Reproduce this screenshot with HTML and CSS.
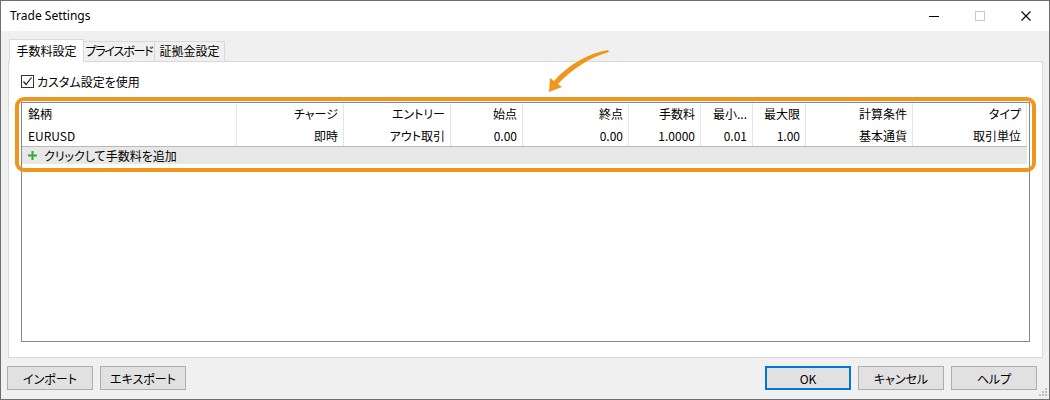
FILE: index.html
```html
<!DOCTYPE html>
<html lang="ja">
  <head>
    <meta charset="UTF-8" />
    <title>Trade Settings</title>
    <link rel="stylesheet" href="styles.css">
  </head>
  <body>
    <div class="window">
      <div class="titlebar">
        <span class="title">Trade Settings</span>
        <div class="caption">
          <div class="cap-btn">
            <svg width="10" height="10" viewBox="0 0 10 10"><rect x="0" y="5" width="10" height="1" fill="#000"/></svg>
          </div>
          <div class="cap-btn">
            <svg width="10" height="10" viewBox="0 0 10 10"><rect x="0.5" y="0.5" width="9" height="9" fill="none" stroke="#c8c8c8"/></svg>
          </div>
          <div class="cap-btn">
            <svg width="10" height="10" viewBox="0 0 10 10"><path d="M0.5 0.5 L9.5 9.5 M9.5 0.5 L0.5 9.5" stroke="#000" stroke-width="1.1"/></svg>
          </div>
        </div>
      </div>

      <div class="client">
        <div class="tabs">
          <div class="tab active">手数料設定</div>
          <div class="tab tab-board">プライスボード</div>
          <div class="tab tab-margin">証拠金設定</div>
        </div>

        <div class="panel">
          <label class="check">
            <span class="box">
              <svg width="11" height="11" viewBox="0 0 11 11"><polyline points="1.5,5.5 4,8.5 9.5,1.5" fill="none" stroke="#222" stroke-width="1.2"/></svg>
            </span>
            カスタム設定を使用
          </label>

          <div class="grid">
            <div class="row head">
              <div class="cell left">銘柄</div>
              <div class="cell">チャージ</div>
              <div class="cell">エントリー</div>
              <div class="cell">始点</div>
              <div class="cell">終点</div>
              <div class="cell">手数料</div>
              <div class="cell">最小...</div>
              <div class="cell">最大限</div>
              <div class="cell">計算条件</div>
              <div class="cell">タイプ</div>
            </div>
            <div class="row data">
              <div class="cell left">EURUSD</div>
              <div class="cell">即時</div>
              <div class="cell">アウト取引</div>
              <div class="cell">0.00</div>
              <div class="cell">0.00</div>
              <div class="cell">1.0000</div>
              <div class="cell">0.01</div>
              <div class="cell">1.00</div>
              <div class="cell">基本通貨</div>
              <div class="cell">取引単位</div>
            </div>
            <div class="add-row">
              <svg width="9" height="9" viewBox="0 0 9 9"><path d="M3.5 0h2v3.5h3.5v2h-3.5v3.5h-2v-3.5h-3.5v-2h3.5z" fill="#2eac2e"/></svg>
              <span>クリックして手数料を追加</span>
            </div>
          </div>

          <div class="highlight"></div>
        </div>

        <div class="footer">
          <div class="group">
            <button class="btn">インポート</button>
            <button class="btn">エキスポート</button>
          </div>
          <div class="group">
            <button class="btn default">OK</button>
            <button class="btn">キャンセル</button>
            <button class="btn">ヘルプ</button>
          </div>
        </div>
      </div>

      <!-- callout arrow pointing at the commission grid -->
      <svg class="arrow" width="70" height="50" viewBox="545 46 70 50">
        <path d="M608,50 C590,53 570,63 554,81 L550,78 L549,92 L562,87 L558,84 C573,68 591,57 609,52 Z" fill="#f0961c"/>
      </svg>

      <svg class="grip" width="9" height="9" viewBox="0 0 9 9">
        <g fill="#bdbdbd">
          <rect x="6" y="0" width="2" height="2"/>
          <rect x="3" y="3" width="2" height="2"/>
          <rect x="6" y="3" width="2" height="2"/>
          <rect x="0" y="6" width="2" height="2"/>
          <rect x="3" y="6" width="2" height="2"/>
          <rect x="6" y="6" width="2" height="2"/>
        </g>
      </svg>
    </div>
  </body>
</html>
```

FILE: styles.css
```css
* {
  margin: 0;
  padding: 0;
  box-sizing: border-box;
}
body {
  background: #f0f0f0;
  font-family: "Noto Sans CJK JP", "Noto Sans", sans-serif;
  font-feature-settings: "palt";
  font-size: 12px;
  color: #000;
}
.window {
  position: relative;
  width: 1050px;
  height: 400px;
  border: 1px solid #6e6e6e;
  background: #f0f0f0;
}
.titlebar {
  height: 30px;
  background: #fff;
  display: flex;
  align-items: center;
  justify-content: space-between;
}
.title {
  font-family: "Noto Sans", sans-serif;
  font-size: 12px;
  padding-left: 9px;
  padding-bottom: 2px;
}
.caption {
  display: flex;
  height: 30px;
}
.cap-btn {
  width: 46px;
  height: 30px;
  display: flex;
  align-items: center;
  justify-content: center;
}

.client {
  padding: 8px 6px 0 7px;
}
.tabs {
  display: flex;
  align-items: flex-end;
  height: 22px;
  padding-left: 1px;
}
.tab {
  height: 20px;
  line-height: 18px;
  text-align: center;
  border: 1px solid #d9d9d9;
  border-bottom: 0;
  margin-left: -1px;
  background: #f0f0f0;
  white-space: nowrap;
}
.tab.active {
  width: 75px;
  height: 23px;
  margin-bottom: -1px;
  margin-left: 0;
  line-height: 21px;
  background: #fff;
  position: relative;
  z-index: 1;
}
.tab-board {
  width: 72px;
  letter-spacing: -1.2px;
}
.tab-margin {
  width: 71px;
}

.panel {
  position: relative;
  height: 297px;
  background: #fff;
  border: 1px solid #d9d9d9;
  padding: 13px 12px 0 12px;
}
.check {
  display: flex;
  align-items: center;
  gap: 3px;
  height: 13px;
}
.box {
  width: 13px;
  height: 13px;
  border: 1px solid #333;
  display: flex;
  align-items: center;
  justify-content: center;
}

.grid {
  margin-top: 14px;
  width: 1009px;
  height: 240px;
  border: 1px solid #828790;
  background: #fff;
}
.row {
  display: grid;
  grid-template-columns: 215px 107px 107px 72px 106px 72px 52px 53px 107px 114px;
}
.row.head {
  height: 22px;
}
.row.data {
  height: 22px;
  border-bottom: 1px solid #b9b9b9;
  width: 1005px;
}
.cell {
  border-right: 1px solid #e5e5e5;
  text-align: right;
  padding: 0 5px;
  line-height: 21px;
  white-space: nowrap;
  overflow: hidden;
}
.cell.left {
  text-align: left;
  padding-left: 6px;
}
.add-row {
  width: 1005px;
  height: 17px;
  background: #e8e8e8;
  display: flex;
  align-items: center;
  gap: 7px;
  padding-left: 6px;
}

.highlight {
  position: absolute;
  left: 6px;
  top: 35px;
  width: 1021px;
  height: 75px;
  border: 4px solid #f0961c;
  border-radius: 9px;
  pointer-events: none;
}

.footer {
  display: flex;
  justify-content: space-between;
  margin: 8px 6px 0 -1px;
}
.group {
  display: flex;
  gap: 7px;
}
.btn {
  width: 86px;
  height: 24px;
  background: #e1e1e1;
  border: 1px solid #adadad;
  font-family: inherit;
  font-feature-settings: "palt";
  font-size: 12px;
  color: #000;
}
.btn.default {
  border: 2px solid #0078d7;
}

.arrow {
  position: absolute;
  left: 544px;
  top: 45px;
}
.grip {
  position: absolute;
  right: 1px;
  bottom: 2px;
}
```
